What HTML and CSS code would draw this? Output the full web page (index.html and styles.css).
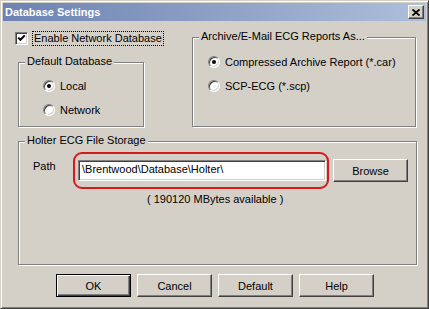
FILE: index.html
```html
<!DOCTYPE html>
<html lang="en">
<head>
    <meta charset="UTF-8">
    <title>Database Settings</title>
    <link rel="stylesheet" href="styles.css">
</head>
<body>
    <div class="window">
        <div class="titlebar">
            <span class="title">Database Settings</span>
            <button class="close" title="Close">
                <svg width="8" height="7" viewBox="0 0 8 7"><path d="M0.5 0.5 L7.5 6.5 M7.5 0.5 L0.5 6.5" stroke="#000" stroke-width="1.8" fill="none"/></svg>
            </button>
        </div>

        <div class="top">
            <div class="left">
                <div class="check-row">
                    <span class="checkbox">
                        <svg width="9" height="9" viewBox="0 0 9 9"><path d="M1.2 3.6 L3.4 5.8 L7.8 1.4" stroke="#000" stroke-width="2" fill="none"/></svg>
                    </span>
                    <span class="focus">Enable Network Database</span>
                </div>

                <div class="group default-db">
                    <span class="group-title">Default Database</span>
                    <div class="options">
                        <div class="option"><span class="radio on"></span>Local</div>
                        <div class="option"><span class="radio"></span>Network</div>
                    </div>
                </div>
            </div>

            <div class="group archive">
                <span class="group-title">Archive/E-Mail ECG Reports As...</span>
                <div class="options">
                    <div class="option"><span class="radio on"></span>Compressed Archive Report (*.car)</div>
                    <div class="option"><span class="radio"></span>SCP-ECG (*.scp)</div>
                </div>
            </div>
        </div>

        <div class="group holter">
            <span class="group-title">Holter ECG File Storage</span>
            <div class="path-row">
                <span class="path-label">Path</span>
                <div class="highlight">
                    <div class="edit">\Brentwood\Database\Holter\</div>
                </div>
                <button class="btn">Browse</button>
            </div>
            <div class="free">( 190120 MBytes available )</div>
        </div>

        <div class="buttons">
            <button class="btn default">OK</button>
            <button class="btn">Cancel</button>
            <button class="btn">Default</button>
            <button class="btn">Help</button>
        </div>
    </div>
</body>
</html>
```

FILE: styles.css
```css
body {
    margin: 0;
    font-family: "Liberation Sans", Arial, sans-serif;
    font-size: 11px;
    color: #000;
}

.window {
    box-sizing: border-box;
    width: 429px;
    height: 309px;
    background-color: #d4d0c8;
    border: 1px solid;
    border-color: #d4d0c8 #404040 #404040 #d4d0c8;
    box-shadow: inset 1px 1px #fff, inset -1px -1px #808080;
    padding: 2px;
}

.titlebar {
    height: 18px;
    display: flex;
    align-items: center;
    justify-content: space-between;
    background: linear-gradient(to right, #6c82b2, #aebfda);
    padding: 0 2px;
}

.title {
    color: #fff;
    font-weight: bold;
    font-size: 11px;
}

.close {
    box-sizing: border-box;
    width: 16px;
    height: 14px;
    padding: 0;
    display: flex;
    align-items: center;
    justify-content: center;
    background-color: #d4d0c8;
    border: 1px solid;
    border-color: #fff #404040 #404040 #fff;
    box-shadow: inset -1px -1px #808080;
}

.top {
    display: flex;
    padding-left: 12px;
}

.left {
    width: 177px;
}

.check-row {
    display: flex;
    align-items: center;
    height: 15px;
    margin-top: 10px;
}

.checkbox {
    box-sizing: border-box;
    width: 13px;
    height: 13px;
    background-color: #fff;
    border: 1px solid;
    border-color: #808080 #fff #fff #808080;
    box-shadow: inset 1px 1px #404040, inset -1px -1px #d4d0c8;
    display: flex;
    align-items: center;
    justify-content: center;
}

.focus {
    margin-left: 4px;
    padding: 0 1px;
    line-height: 13px;
    border: 1px dotted #000;
}

.group {
    box-sizing: border-box;
    border: 1px solid #808080;
    box-shadow: inset 1px 1px #fff, 1px 1px #fff;
}

.group-title {
    display: table;
    height: 13px;
    line-height: 13px;
    margin: -8px 0 0 6px;
    padding: 0 2px;
    background-color: #d4d0c8;
}

.default-db {
    width: 126px;
    height: 65px;
    margin: 16px 0 0 3px;
}

.default-db .options {
    padding: 10px 0 0 24px;
}

.archive {
    width: 224px;
    height: 90px;
    margin-top: 16px;
}

.archive .options {
    padding: 11px 0 0 15px;
}

.options {
    display: flex;
    flex-direction: column;
    gap: 8px;
}

.option {
    display: flex;
    align-items: center;
    height: 16px;
}

.radio {
    box-sizing: border-box;
    position: relative;
    width: 12px;
    height: 12px;
    margin-right: 5px;
    border-radius: 50%;
    background-color: #fff;
    border: 1px solid;
    border-color: #808080 #fff #fff #808080;
    box-shadow: inset 1px 1px #404040, inset -1px -1px #d4d0c8;
}

.radio.on::after {
    content: "";
    position: absolute;
    left: 3px;
    top: 3px;
    width: 4px;
    height: 4px;
    border-radius: 50%;
    background-color: #000;
}

.holter {
    width: 399px;
    height: 124px;
    margin: 14px 0 0 15px;
}

.path-row {
    display: flex;
    align-items: center;
    margin-top: 5px;
    padding-left: 14px;
}

.path-label {
    width: 40px;
    margin-top: -9px;
}

.highlight {
    border: 2px solid #d41a1a;
    border-radius: 9px;
    padding: 6px 1px 6px 3px;
}

.edit {
    box-sizing: border-box;
    width: 248px;
    height: 21px;
    line-height: 17px;
    padding: 0 3px;
    background-color: #fff;
    border: 1px solid;
    border-color: #808080 #fff #fff #808080;
    box-shadow: inset 1px 1px #404040, inset -1px -1px #d4d0c8;
}

.free {
    margin-top: 4px;
    padding-left: 128px;
    line-height: 13px;
}

.btn {
    box-sizing: border-box;
    width: 75px;
    height: 23px;
    padding: 0;
    font-family: inherit;
    font-size: 11px;
    color: #000;
    background-color: #d4d0c8;
    border: 1px solid;
    border-color: #fff #404040 #404040 #fff;
    box-shadow: inset -1px -1px #808080;
}

.path-row .btn {
    margin-left: 4px;
}

.btn.default {
    border-color: #000;
    box-shadow: inset 1px 1px #fff, inset -1px -1px #404040, inset -2px -2px #808080;
}

.buttons {
    display: flex;
    gap: 6px;
    margin-top: 9px;
    padding-left: 53px;
}
```
